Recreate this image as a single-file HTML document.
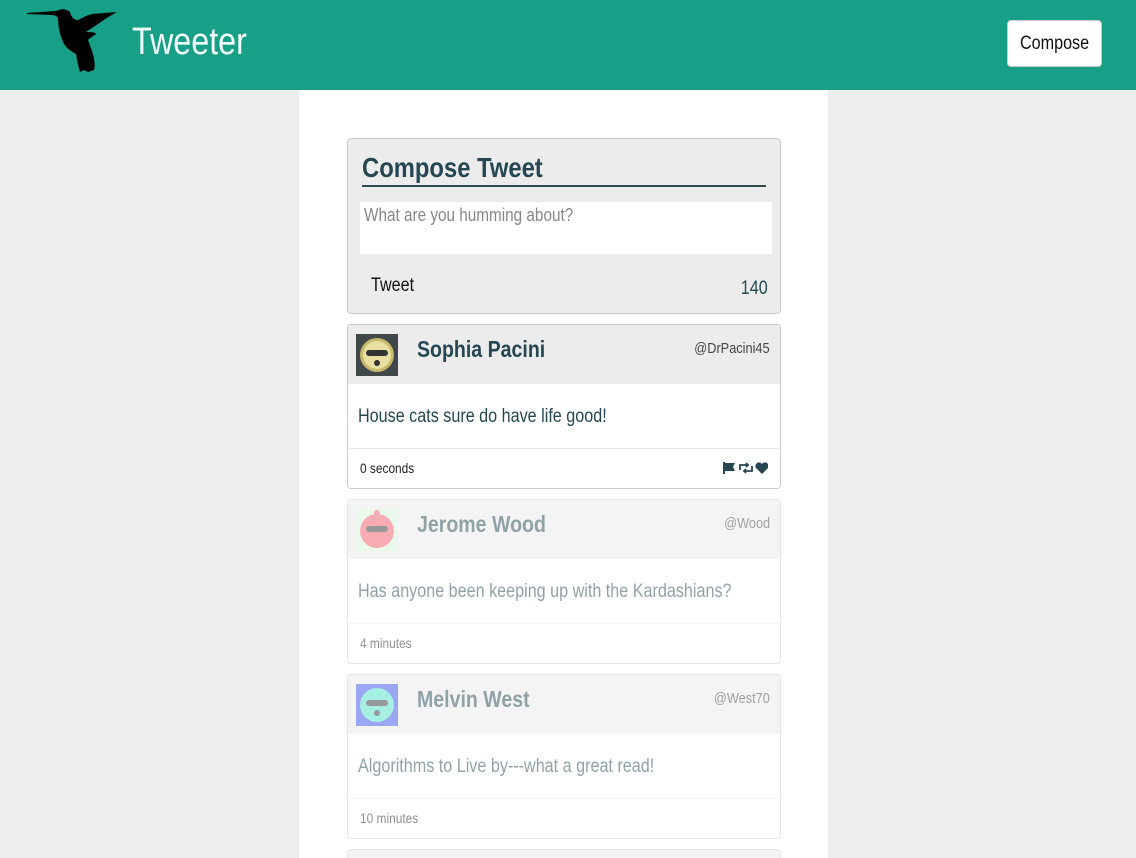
<!DOCTYPE html>
<html><head><style>
html,body{margin:0;width:1136px;height:858px;overflow:hidden}
body{background:#ededed;font-family:"Liberation Sans",sans-serif;color:#244751;position:relative}
.s{display:inline-block;transform:scaleX(.85);transform-origin:left center;white-space:nowrap}
.r{transform-origin:right center}
.hdr{position:absolute;left:0;top:0;width:1136px;height:90px;background:#179f87}
.hdr .t{position:absolute;left:132px;top:21px;font-size:38px;color:#f2fffc}
.btn{position:absolute;left:1007px;top:20px;width:95px;height:47px;background:#fff;border:1px solid #ccc;border-radius:4px;font-size:19px;color:#111;line-height:45px;box-sizing:border-box;padding-left:12px}
.main{position:absolute;left:299px;top:90px;width:529px;height:768px;background:#fff}
.compose{position:absolute;left:347px;top:138px;width:432px;height:174px;background:#ececec;border:1px solid #ccc;border-radius:4px}
.compose h2{position:absolute;left:14px;top:12px;margin:0;font-size:28px;font-weight:bold;width:404px;border-bottom:2px solid #2d4a4f;padding-bottom:1px;line-height:33px}
.ta{position:absolute;left:12px;top:63px;width:412px;height:52px;background:#fff;font-size:18px;color:#888;box-sizing:border-box;padding:3px 4px}
.tw{position:absolute;left:23px;top:136px;font-size:19px;color:#111}
.cnt{position:absolute;right:12px;top:139px;font-size:19px}
.card{position:absolute;left:347px;width:432px;height:163px;border:1px solid #ccc;border-radius:4px;background:#fff;overflow:hidden}
.card .h{height:59px;background:#ececec;position:relative}
.av{position:absolute;left:8px;top:9px;width:42px;height:42px}
.nm{position:absolute;left:69px;top:11px;font-size:23px;font-weight:bold}
.hd{position:absolute;right:10px;top:15px;font-size:15px;color:#444}
.bd{height:65px;border-bottom:1px solid #e8e8e8;font-size:19px;padding-left:10px;line-height:65px;box-sizing:border-box}
.ft{position:relative;height:39px;font-size:14px;padding-left:12px;line-height:38px;color:#222}
.ic{position:absolute;right:12px;top:12px}
.fade{opacity:.5}
.fade .h{background:#eaeaea}
</style></head><body>
<div class="hdr">
<svg style="position:absolute;left:26px;top:6px" width="94" height="68" viewBox="0 0 94 68"><path fill="#000" d="M1 7 L30 5 Q38 1 44 6 Q46 14 52 14 L60 10 L66 8 L78 7 L91 6 Q80 12 72 18 Q66 22 60 26 Q70 26 70 28 Q64 32 62 34 L66 45 Q70 58 68 64 L62 66 L58 64 L54 66 Q52 60 50 48 Q42 44 38 38 Q32 26 32 12 Q30 9 26 9 L1 8Z"/></svg>
<div class="t"><span class="s">Tweeter</span></div>
<div class="btn"><span class="s">Compose</span></div>
</div>
<div class="main"></div>
<div class="compose"><h2><span class="s">Compose Tweet</span></h2><div class="ta"><span class="s">What are you humming about?</span></div><div class="tw"><span class="s">Tweet</span></div><div class="cnt"><span class="s r">140</span></div></div>

<div class="card" style="top:324px"><div class="h">
<svg class="av" viewBox="0 0 42 42"><rect width="42" height="42" fill="#3f4749"/><circle cx="21" cy="21" r="17" fill="#c7b96a"/><circle cx="21" cy="21" r="14" fill="#e8e0a0"/><rect x="10" y="16" width="22" height="6" rx="3" fill="#333"/><circle cx="21" cy="29" r="3" fill="#333"/></svg>
<div class="nm"><span class="s">Sophia Pacini</span></div><div class="hd"><span class="s r">@DrPacini45</span></div></div>
<div class="bd"><span class="s">House cats sure do have life good!</span></div>
<div class="ft"><span class="s">0 seconds</span><svg class="ic" width="46" height="14" viewBox="0 0 46 14"><path fill="#244751" d="M1 1h2v12H1zM3 2h10l-2 4 2 4H3z"/><path fill="none" stroke="#244751" stroke-width="1.8" d="M18 9V4h8M24 2l2 2-2 2M30 5v5h-8M24 12l-2-2 2-2"/><path fill="#244751" d="M40 13L34 7a3.3 3.3 0 0 1 6-4a3.3 3.3 0 0 1 6 4z"/></svg></div></div>

<div class="card fade" style="top:499px"><div class="h">
<svg class="av" viewBox="0 0 42 42"><rect width="42" height="42" fill="#d8f5dc"/><circle cx="21" cy="22" r="17" fill="#f05a6a"/><rect x="10" y="17" width="22" height="6" rx="3" fill="#333"/><circle cx="21" cy="4" r="3" fill="#f05a6a"/></svg>
<div class="nm"><span class="s">Jerome Wood</span></div><div class="hd"><span class="s r">@Wood</span></div></div>
<div class="bd"><span class="s">Has anyone been keeping up with the Kardashians?</span></div>
<div class="ft"><span class="s">4 minutes</span></div></div>

<div class="card fade" style="top:674px"><div class="h">
<svg class="av" viewBox="0 0 42 42"><rect width="42" height="42" fill="#3a52e8"/><circle cx="21" cy="21" r="17" fill="#4ee0c8"/><rect x="10" y="16" width="22" height="6" rx="3" fill="#333"/><circle cx="21" cy="29" r="3" fill="#333"/></svg>
<div class="nm"><span class="s">Melvin West</span></div><div class="hd"><span class="s r">@West70</span></div></div>
<div class="bd"><span class="s">Algorithms to Live by---what a great read!</span></div>
<div class="ft"><span class="s">10 minutes</span></div></div>

<div style="position:absolute;left:347px;top:849px;width:432px;height:8px;border:1px solid #ccc;border-bottom:none;border-radius:4px 4px 0 0;background:#eaeaea;opacity:.5"></div>
</body></html>
